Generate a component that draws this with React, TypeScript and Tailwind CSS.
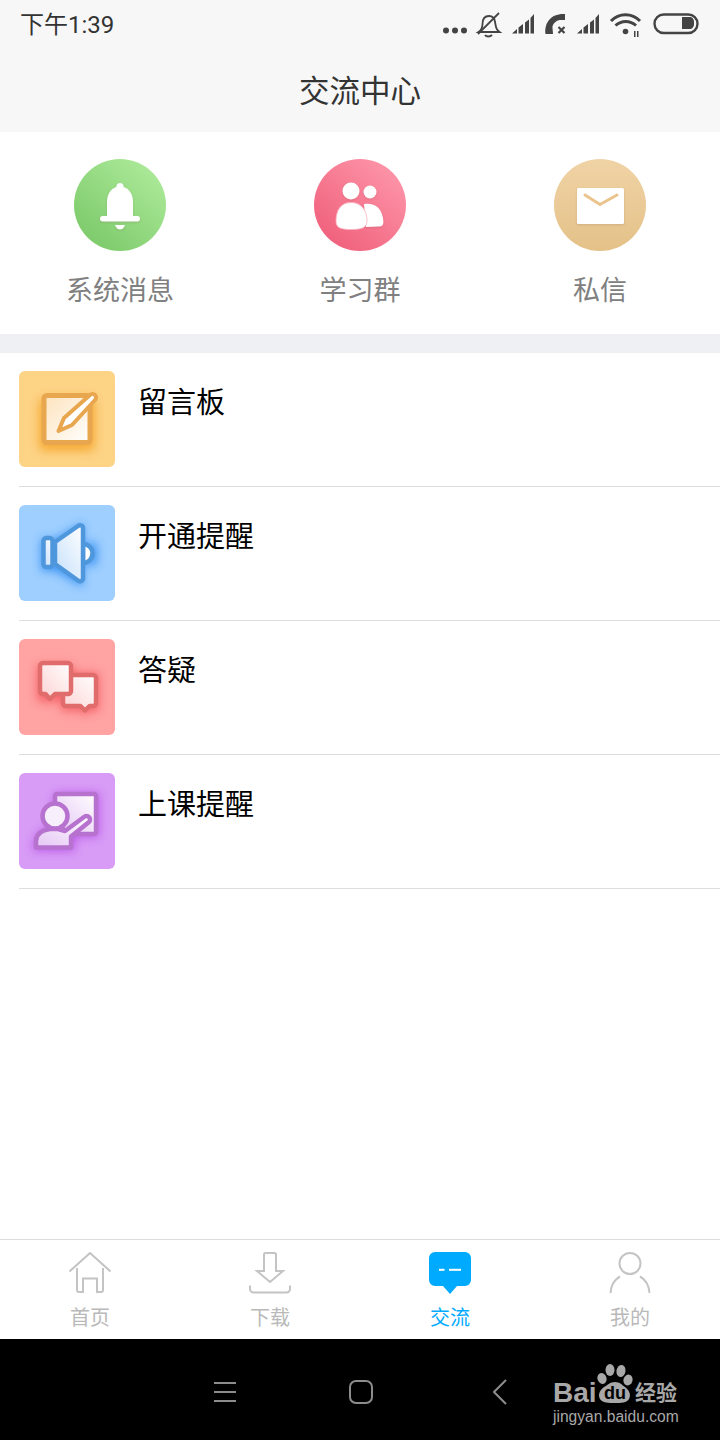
import React from 'react';

const cjk = "font-['Noto_Sans_CJK_SC','Noto_Sans',sans-serif]";
const softShadow = 'drop-shadow-[0_1px_1px_rgba(120,60,60,0.18)]';

const StatusIcons: React.FC = () => (
  <svg width="260" height="28" viewBox="440 11 260 28">
    <g fill="#444">
      <circle cx="446" cy="30.500" r="3" />
      <circle cx="455" cy="30.500" r="3" />
      <circle cx="464" cy="30.500" r="3" />
      {/* signal bars */}
      <path d="M512 33.500 l5 -4.500 v4.500z M518.500 27.500 l4.500 -3.500 v9.500 h-4.500z M525 22.500 l4 -3 v14 h-4z M530.500 18 l3.500 -4 v19.500 h-3.500z" />
      <path d="M577 33.500 l5 -4.500 v4.500z M583.500 27.500 l4.500 -3.500 v9.500 h-4.500z M590 22.500 l4 -3 v14 h-4z M595.500 18 l3.500 -4 v19.500 h-3.500z" />
      {/* call */}
      <path d="M545.500 34 C544 22 552 13 565 14 V20 L559.500 20 C555 21 552 25 552.500 28 L553 34z" />
      {/* wifi bits */}
      <circle cx="625.500" cy="31.500" r="2.800" />
      <rect x="634" y="31" width="1.500" height="6" />
      <rect x="637" y="31" width="1.500" height="6" />
      {/* battery */}
      <path d="M682 17 h9 a6 6 0 0 1 3 6 a6 6 0 0 1 -3 6 h-9z" />
    </g>
    <g fill="none" stroke="#444">
      <path d="M558.500 27 l6 6 M564.500 27 l-6 6" strokeWidth="2.200" />
      <path d="M611 21 c8 -8.500 21 -8.500 29 0" strokeWidth="3" />
      <path d="M615.500 25.500 c6 -5.500 14.500 -5.500 20.500 0" strokeWidth="3" />
      <rect x="654.500" y="14.500" width="43" height="18.500" rx="9.250" strokeWidth="2.400" />
      <path d="M478 34 l21 -21" strokeWidth="1.800" />
      <path d="M478.500 32 c3 -2 4 -4 4 -8 c0 -5 2.500 -8 6.500 -8 c3 0 5.500 2 6 6 l1 5 c0.500 3 2 4 3.500 5 z" strokeWidth="1.800" />
      <path d="M485 35 c1.500 2 5 2 7 0" strokeWidth="2" />
    </g>
  </svg>
);

const BellCircle: React.FC = () => (
  <svg width="92" height="92" viewBox="0 0 92 92">
    <defs>
      <linearGradient id="greenBg" x1="0.85" y1="0.1" x2="0.2" y2="0.85">
        <stop offset="0" stopColor="#abe998" />
        <stop offset="1" stopColor="#80cc6e" />
      </linearGradient>
    </defs>
    <circle cx="46" cy="46" r="46" fill="url(#greenBg)" />
    <g fill="#fff" className={softShadow}>
      <circle cx="46" cy="27.500" r="3.600" />
      <path d="M33 58 V43 c0 -9 5 -15.500 13 -15.500 s13 6.500 13 15.500 V58z" />
      <rect x="26" y="57" width="40" height="5.500" rx="2.700" />
      <path d="M41 66 h10 c-1 3 -3 4.500 -5 4.500 s-4 -1.500 -5 -4.500z" />
    </g>
  </svg>
);

const GroupCircle: React.FC = () => (
  <svg width="92" height="92" viewBox="0 0 92 92">
    <defs>
      <linearGradient id="pinkBg" x1="0.85" y1="0.1" x2="0.2" y2="0.85">
        <stop offset="0" stopColor="#fd94a8" />
        <stop offset="1" stopColor="#f1647f" />
      </linearGradient>
    </defs>
    <circle cx="46" cy="46" r="46" fill="url(#pinkBg)" />
    <g fill="#fff" className={softShadow}>
      <circle cx="37" cy="32" r="8.500" />
      <circle cx="56" cy="33" r="6.500" />
      <path d="M50 45 c10 -1.500 17 3 19 14 c1 7 0 8.500 -5 8.500 l-12 0.500z" />
    </g>
    <path d="M22 62 c0 -11 5 -18.500 15 -18.500 s16 7.500 16 18.500 c0 6 -4 8.500 -16 8.500 s-15 -2.500 -15 -8.500z" fill="#fff" stroke="#f8b4c0" strokeWidth="0.800" />
  </svg>
);

const MailCircle: React.FC = () => (
  <svg width="92" height="92" viewBox="0 0 92 92">
    <defs>
      <linearGradient id="tanBg" x1="0.5" y1="0" x2="0.5" y2="1">
        <stop offset="0" stopColor="#f0d3a6" />
        <stop offset="1" stopColor="#e4c188" />
      </linearGradient>
    </defs>
    <circle cx="46" cy="46" r="46" fill="url(#tanBg)" />
    <rect x="23" y="29" width="47" height="36" rx="1.500" fill="#fff" className={softShadow} />
    <path d="M31 36 L46 45.500 L63 36" fill="none" stroke="#eac48c" strokeWidth="3" strokeLinecap="round" strokeLinejoin="round" />
  </svg>
);

const NoteIcon: React.FC = () => (
  <svg width="96" height="96" viewBox="0 0 96 96">
    <defs>
      <linearGradient id="noteFill" x1="1" y1="1" x2="0" y2="0">
        <stop offset="0" stopColor="#fff" />
        <stop offset="1" stopColor="#fde3bd" />
      </linearGradient>
      <filter id="noteGlow" x="-40%" y="-40%" width="180%" height="180%">
        <feGaussianBlur stdDeviation="5" />
      </filter>
    </defs>
    <rect x="20" y="27" width="56" height="53" rx="6" fill="#f5a52c" opacity="0.85" filter="url(#noteGlow)" />
    <rect x="25" y="24.500" width="46" height="47" rx="3" fill="url(#noteFill)" stroke="#e8a64f" strokeWidth="5" />
    <path d="M39.500 60 L45 47 L71 24 a3.500 3.500 0 0 1 5 5 L53 54 z" fill="#fff" stroke="#e8a64f" strokeWidth="4" strokeLinejoin="round" />
  </svg>
);

const SpeakerIcon: React.FC = () => (
  <svg width="96" height="96" viewBox="0 0 96 96">
    <defs>
      <linearGradient id="speakerFill" x1="1" y1="0" x2="0.1" y2="1">
        <stop offset="0" stopColor="#fff" />
        <stop offset="1" stopColor="#c6e0fb" />
      </linearGradient>
      <filter id="speakerGlow" x="-40%" y="-40%" width="180%" height="180%">
        <feGaussianBlur stdDeviation="5" />
      </filter>
    </defs>
    <path d="M22 34 h14 L64 18 V82 L36 66 H22z M66 38 h12 v22 h-12z" fill="#2f8cf0" opacity="0.85" filter="url(#speakerGlow)" />
    <g stroke="#4f97dc" strokeWidth="4.500" strokeLinejoin="round" fill="url(#speakerFill)">
      <path d="M64 39 a9.500 9.500 0 0 1 0 19z" fill="#fff" />
      <rect x="24.500" y="33" width="9" height="29" rx="3" />
      <path d="M36 37 L59 21 a3 3 0 0 1 5 2.500 V73 a3 3 0 0 1 -5 2.500 L36 59 z" />
    </g>
  </svg>
);

const ChatIcon: React.FC = () => (
  <svg width="96" height="96" viewBox="0 0 96 96">
    <defs>
      <linearGradient id="chatFill" x1="1" y1="0" x2="0" y2="1">
        <stop offset="0" stopColor="#fff" />
        <stop offset="1" stopColor="#fdd2d2" />
      </linearGradient>
      <filter id="chatGlow" x="-40%" y="-40%" width="180%" height="180%">
        <feGaussianBlur stdDeviation="5" />
      </filter>
    </defs>
    <path d="M18 26 h36 v8 h26 v38 h-10 l-4 5 -4 -5 h-20 v-10 h-10 l-3 4 -3 -4 h-8z" fill="#f25a60" opacity="0.85" filter="url(#chatGlow)" />
    <g stroke="#e06c6c" strokeWidth="4.500" strokeLinejoin="round" fill="url(#chatFill)">
      <path d="M48 36 h26 a3 3 0 0 1 3 3 V64 a3 3 0 0 1 -3 3 h-3.500 L66 71.500 61.500 67 H47 a3 3 0 0 1 -3 -3 V39 z" />
      <path d="M24 24 H49 a3 3 0 0 1 3 3 V52 a3 3 0 0 1 -3 3 H36 L31 60 26.500 55 H24 a3 3 0 0 1 -3 -3 V27 a3 3 0 0 1 3 -3z" />
    </g>
  </svg>
);

const TeachIcon: React.FC = () => (
  <svg width="96" height="96" viewBox="0 0 96 96">
    <defs>
      <linearGradient id="teachFill" x1="1" y1="0" x2="0" y2="1">
        <stop offset="0" stopColor="#fff" />
        <stop offset="1" stopColor="#e4c4f4" />
      </linearGradient>
      <filter id="teachGlow" x="-40%" y="-40%" width="180%" height="180%">
        <feGaussianBlur stdDeviation="5" />
      </filter>
    </defs>
    <path d="M14 78 c0 -14 6 -20 16 -24 l6 -34 h44 v44 h-24 v14z" fill="#b03fe0" opacity="0.7" filter="url(#teachGlow)" />
    <g stroke="#b771cf" strokeWidth="4.500" strokeLinejoin="round" fill="url(#teachFill)">
      <path d="M38 21 H75 a2 2 0 0 1 2 2 V59 a2 2 0 0 1 -2 2 H48 L36 46 V23 a2 2 0 0 1 2 -2z" />
      <path d="M17 74.500 V68 c0 -7 6 -11 14 -12 h8 l7 2 L65 44 a3.500 3.500 0 0 1 5 5 L52 63.500 V74.500z" />
      <circle cx="36" cy="43" r="12.500" fill="#f8effc" />
    </g>
  </svg>
);

const HomeTab: React.FC = () => (
  <svg width="42" height="42" viewBox="0 0 42 42" fill="none" stroke="#c4c4c4" strokeWidth="2">
    <path d="M0.500 19.500 L21 1 L41.500 19.500" />
    <path d="M8 16 V38 a2 2 0 0 0 2 2 H14 V26.500 H28 V40 H32 a2 2 0 0 0 2 -2 V16" />
  </svg>
);

const DownloadTab: React.FC = () => (
  <svg width="42" height="42" viewBox="0 0 42 42" fill="none" stroke="#c4c4c4" strokeWidth="2">
    <path d="M15 19 V2.500 a1.500 1.500 0 0 1 1.500 -1.500 H25.500 a1.500 1.500 0 0 1 1.500 1.500 V19 H34 L21 30 L8 19z" />
    <path d="M1 33.500 V37 a3.500 3.500 0 0 0 3.500 3.500 H37.500 a3.500 3.500 0 0 0 3.500 -3.500 V33.500" />
  </svg>
);

const ChatTab: React.FC = () => (
  <svg width="42" height="42" viewBox="0 0 42 42">
    <path d="M6 0 H36 a6 6 0 0 1 6 6 V28 a6 6 0 0 1 -6 6 H28 L21 42 L14 34 H6 a6 6 0 0 1 -6 -6 V6 a6 6 0 0 1 6 -6z" fill="#00aaff" />
    <rect x="10" y="16.800" width="5.500" height="2" fill="#fff" />
    <rect x="20" y="16.800" width="12" height="2" fill="#fff" />
  </svg>
);

const UserTab: React.FC = () => (
  <svg width="42" height="42" viewBox="0 0 42 42" fill="none" stroke="#c4c4c4" strokeWidth="2">
    <circle cx="21" cy="11.500" r="10.500" />
    <path d="M1.500 41 C2 33 5.500 27.500 11 24.500 M31 24.500 C36.500 27.500 40 33 40.500 41" />
  </svg>
);

const quickItems = [
  { label: '系统消息', icon: <BellCircle /> },
  { label: '学习群', icon: <GroupCircle /> },
  { label: '私信', icon: <MailCircle /> },
];

const rows = [
  { label: '留言板', bg: 'bg-[#fdd386]', icon: <NoteIcon /> },
  { label: '开通提醒', bg: 'bg-[#9fcfff]', icon: <SpeakerIcon /> },
  { label: '答疑', bg: 'bg-[#ffa3a3]', icon: <ChatIcon /> },
  { label: '上课提醒', bg: 'bg-[#d89cf6]', icon: <TeachIcon /> },
];

const tabs = [
  { label: '首页', icon: <HomeTab />, active: false },
  { label: '下载', icon: <DownloadTab />, active: false },
  { label: '交流', icon: <ChatTab />, active: true },
  { label: '我的', icon: <UserTab />, active: false },
];

const App: React.FC = () => {
  return (
    <div className={`relative flex h-[1440px] w-[720px] flex-col overflow-hidden bg-white ${cjk}`}>
      {/* status bar + title */}
      <div className="h-[132px] shrink-0 bg-[#f7f7f7]">
        <div className="flex h-[50px] items-center justify-between pl-[20px] pr-[20px]">
          <span className="pb-[1px] font-['Roboto','Noto_Sans_CJK_SC',sans-serif] text-[24px] leading-none text-[#333]">
            下午1:39
          </span>
          <StatusIcons />
        </div>
        <div className="flex h-[82px] items-center justify-center pb-[3px] text-[30.500px] leading-none text-[#333]">
          交流中心
        </div>
      </div>

      {/* quick entries */}
      <div className="grid h-[221px] shrink-0 grid-cols-3 border-b-[19px] border-[#eff0f4] pt-[27px]">
        {quickItems.map((item) => (
          <div key={item.label} className="flex flex-col items-center">
            {item.icon}
            <span className="mt-[19px] text-[27px] leading-[38px] text-[#808080]">{item.label}</span>
          </div>
        ))}
      </div>

      {/* list */}
      <div className="flex-1 pl-[19px]">
        {rows.map((row) => (
          <div key={row.label} className="flex h-[134px] gap-[23px] border-b border-[#dedede] pt-[18px]">
            <div className={`h-[96px] w-[96px] overflow-hidden rounded-[6px] ${row.bg}`}>{row.icon}</div>
            <span className="mt-[8px] text-[29px] leading-[42px] text-black">{row.label}</span>
          </div>
        ))}
      </div>

      {/* tab bar */}
      <div className="grid h-[100px] shrink-0 grid-cols-4 border-t border-[#dcdcdc] bg-white pt-[12px]">
        {tabs.map((tab) => (
          <div key={tab.label} className="flex flex-col items-center">
            {tab.icon}
            <span className={`mt-[8px] text-[20px] leading-[30px] ${tab.active ? 'text-[#00aaff]' : 'text-[#b9b9b9]'}`}>
              {tab.label}
            </span>
          </div>
        ))}
      </div>

      {/* system nav */}
      <div className="flex h-[101px] shrink-0 items-center bg-black pl-[214px] pt-[5px]">
        <svg width="22" height="20" viewBox="0 0 22 20" stroke="#8c8c8c" strokeWidth="2">
          <path d="M0 1 H22 M0 10 H22 M0 19 H22" />
        </svg>
        <svg className="ml-[113px]" width="24" height="24" viewBox="0 0 24 24" fill="none" stroke="#8c8c8c" strokeWidth="2">
          <rect x="1" y="1" width="22" height="22" rx="6" />
        </svg>
        <svg className="ml-[120px]" width="14" height="26" viewBox="0 0 14 26" fill="none" stroke="#8c8c8c" strokeWidth="2">
          <path d="M13 1 L1 13 L13 25" />
        </svg>
      </div>

      {/* baidu watermark */}
      <div className="absolute left-[553px] top-[1362px] h-[72px] w-[127px] text-[#a8a8a8]">
        <svg className="absolute left-[44px] top-0" width="36" height="42" viewBox="0 0 36 42" fill="#a8a8a8">
          <ellipse cx="13" cy="8" rx="4.500" ry="6" />
          <ellipse cx="24" cy="9" rx="4.500" ry="6" transform="rotate(10 24 9)" />
          <ellipse cx="5" cy="16.500" rx="4.500" ry="5.500" transform="rotate(-20 5 16.500)" />
          <ellipse cx="31" cy="18" rx="4.500" ry="5.500" transform="rotate(15 31 18)" />
          <path d="M18 20 c5 0 7 3 10 5 c5 4 6 8 4 12 c-2 4 -8 4 -14 4 s-13 0 -15 -4 c-2 -4 -1 -8 4 -12 c4 -2 6 -5 11 -5z" />
        </svg>
        <span className="absolute left-0 top-[16px] font-['Liberation_Sans',sans-serif] text-[28px] font-bold leading-[30px]">
          Bai
        </span>
        <span className="absolute left-[51px] top-[21px] font-['Liberation_Sans',sans-serif] text-[18px] font-bold leading-[20px] text-black">
          du
        </span>
        <span className="absolute left-[82px] top-[17px] text-[21px] font-bold leading-[24px]">经验</span>
        <span className="absolute left-0 top-[45px] whitespace-nowrap font-['Liberation_Sans',sans-serif] text-[15.600px] leading-[20px]">
          jingyan.baidu.com
        </span>
      </div>
    </div>
  );
};

export default App;
